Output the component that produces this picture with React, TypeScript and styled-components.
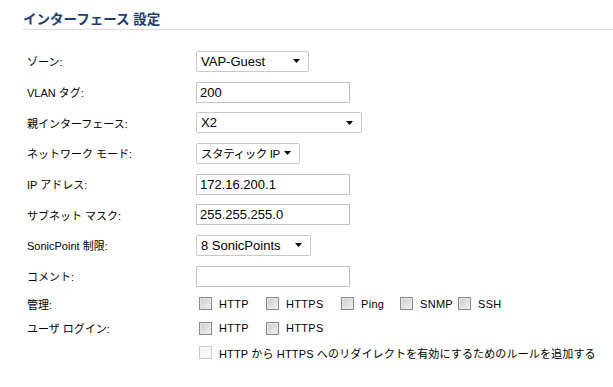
import React from 'react';
import styled, { createGlobalStyle } from 'styled-components';

const GlobalStyle = createGlobalStyle`
    body {
        margin: 0;
        background: #ffffff;
        font-family: "Liberation Sans", "Noto Sans CJK JP", sans-serif;
        color: #000;
    }
`;

const Page = styled.div`
    width: 613px;
    height: 387px;
    padding-left: 23px;
    box-sizing: border-box;
    overflow: hidden;
`;

const Title = styled.h2`
    margin: 0;
    padding-top: 10px;
    height: 19px;
    font-size: 13.5px;
    font-weight: bold;
    color: #1c3d6e;
    line-height: 19px;
    border-bottom: 1px solid #dcdcdc;
`;

const Form = styled.div`
    margin-top: 16px;
    padding-left: 4px;
`;

// 한 줄 (라벨 + 컨트롤)
const Row = styled.div<{ $h?: number }>`
    display: flex;
    align-items: center;
    height: ${(p) => p.$h ?? 30.7}px;
`;

const Label = styled.div`
    width: 169px;
    flex-shrink: 0;
    font-size: 11px;
    white-space: nowrap;
`;

const TextBox = styled.div<{ $w?: number }>`
    width: ${(p) => p.$w ?? 154}px;
    height: 21px;
    box-sizing: border-box;
    border: 1px solid #c3c3c3;
    padding-left: 3px;
    font-size: 13px;
    line-height: 19px;
    white-space: nowrap;
`;

const SelectBox = styled.div<{ $w: number }>`
    width: ${(p) => p.$w}px;
    height: 21px;
    box-sizing: border-box;
    border: 1px solid #c8c8c8;
    border-radius: 2px;
    display: flex;
    align-items: center;
    justify-content: space-between;
    padding: 0 8px 0 4px;
    white-space: nowrap;
`;

const SelectText = styled.span<{ $size?: number }>`
    font-size: ${(p) => p.$size ?? 13}px;
    letter-spacing: ${(p) => (p.$size ? '-0.4px' : '0')};
`;

const Checks = styled.div`
    display: flex;
    align-items: center;
    padding-left: 3px;
`;

const CheckItem = styled.label<{ $w?: number }>`
    display: flex;
    align-items: center;
    gap: 7px;
    width: ${(p) => (p.$w ? `${p.$w}px` : 'auto')};
    font-size: 11px;
    letter-spacing: 0.3px;
    white-space: nowrap;
`;

const Box = styled.span<{ $disabled?: boolean }>`
    display: inline-block;
    width: 13px;
    height: 13px;
    box-sizing: border-box;
    border: 1px solid ${(p) => (p.$disabled ? '#c9c9c9' : '#8a8b8b')};
    background: ${(p) =>
        p.$disabled
            ? 'linear-gradient(135deg, #f1f1f1, #fdfdfd)'
            : 'linear-gradient(135deg, #cbcbcb, #f2f2f2)'};
    box-shadow: inset 0 0 0 1px ${(p) => (p.$disabled ? '#f7f7f7' : '#e6e6e6')};
`;

const RedirectText = styled.span`
    letter-spacing: 0.15px;
`;

const Arrow = () => (
    <svg width="7" height="4" viewBox="0 0 7 4">
        <path d="M0 0 L7 0 L3.5 4 Z" fill="#000" />
    </svg>
);

const Select = ({ w, text, size }: { w: number; text: string; size?: number }) => (
    <SelectBox $w={w}>
        <SelectText $size={size}>{text}</SelectText>
        <Arrow />
    </SelectBox>
);

const Check = ({ text, w, disabled }: { text: string; w?: number; disabled?: boolean }) => (
    <CheckItem $w={w}>
        <Box $disabled={disabled} />
        {text}
    </CheckItem>
);

const App = () => {
    return (
        <Page>
            <GlobalStyle />
            <Title>インターフェース 設定</Title>
            <Form>
                <Row>
                    <Label>ゾーン:</Label>
                    <Select w={113} text="VAP-Guest" />
                </Row>
                <Row>
                    <Label>VLAN タグ:</Label>
                    <TextBox>200</TextBox>
                </Row>
                <Row>
                    <Label>親インターフェース:</Label>
                    <Select w={166} text="X2" />
                </Row>
                <Row>
                    <Label>ネットワーク モード:</Label>
                    <Select w={104} text="スタティック IP" size={11.5} />
                </Row>
                <Row>
                    <Label>IP アドレス:</Label>
                    <TextBox>172.16.200.1</TextBox>
                </Row>
                <Row>
                    <Label>サブネット マスク:</Label>
                    <TextBox>255.255.255.0</TextBox>
                </Row>
                <Row>
                    <Label>SonicPoint 制限:</Label>
                    <Select w={115} text="8 SonicPoints" />
                </Row>
                <Row>
                    <Label>コメント:</Label>
                    <TextBox />
                </Row>
                <Row $h={24.5}>
                    <Label>管理:</Label>
                    <Checks>
                        <Check text="HTTP" w={67} />
                        <Check text="HTTPS" w={75} />
                        <Check text="Ping" w={59} />
                        <Check text="SNMP" w={58} />
                        <Check text="SSH" />
                    </Checks>
                </Row>
                <Row $h={24.5}>
                    <Label>ユーザ ログイン:</Label>
                    <Checks>
                        <Check text="HTTP" w={67} />
                        <Check text="HTTPS" />
                    </Checks>
                </Row>
                <Row $h={24.5}>
                    <Label />
                    <Checks>
                        <CheckItem>
                            <Box $disabled />
                            <RedirectText>HTTP から HTTPS へのリダイレクトを有効にするためのルールを追加する</RedirectText>
                        </CheckItem>
                    </Checks>
                </Row>
            </Form>
        </Page>
    );
};

export default App;
